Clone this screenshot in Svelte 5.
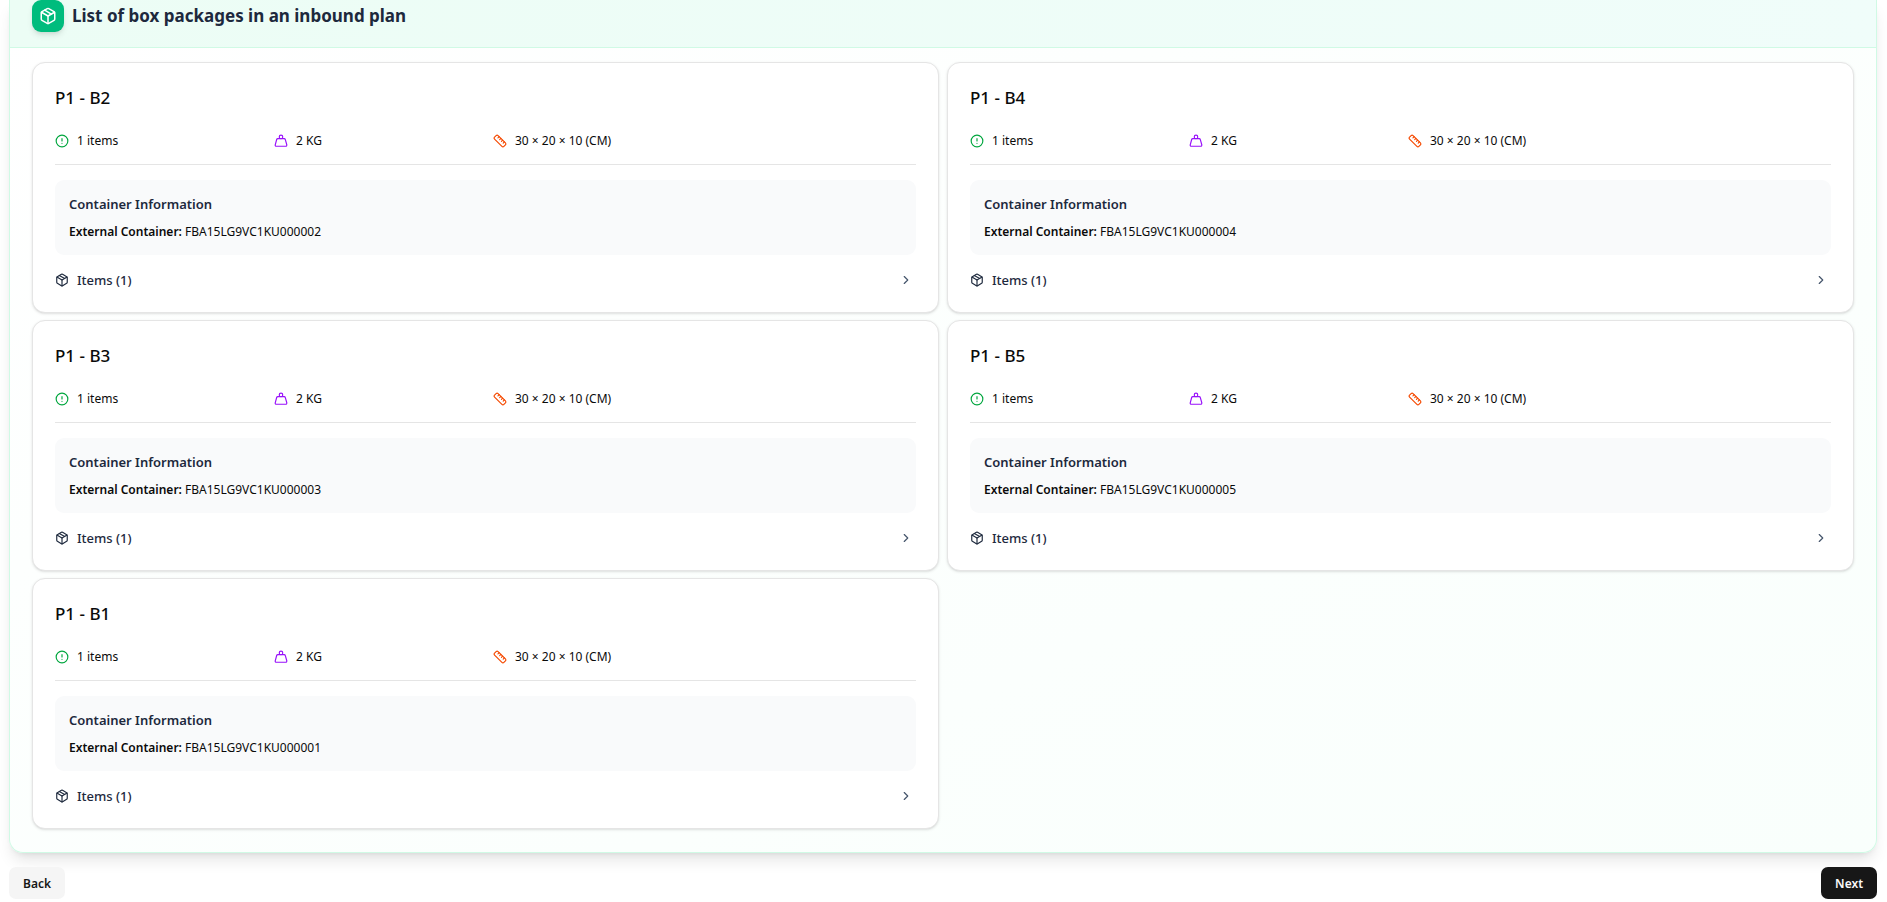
<script lang="ts">
  interface BoxPackage {
    name: string;
    items: number;
    weight: string;
    dimensions: string;
    container: string;
  }

  const names = [
    ['P1 - B2', 'FBA15LG9VC1KU000002'],
    ['P1 - B4', 'FBA15LG9VC1KU000004'],
    ['P1 - B3', 'FBA15LG9VC1KU000003'],
    ['P1 - B5', 'FBA15LG9VC1KU000005'],
    ['P1 - B1', 'FBA15LG9VC1KU000001'],
  ];

  const boxes: BoxPackage[] = names.map(([name, container]) => ({
    name,
    container,
    items: 1,
    weight: '2 KG',
    dimensions: '30 × 20 × 10 (CM)',
  }));

  let open = $state<Record<string, boolean>>({});

  function toggle(name: string) {
    open[name] = !open[name];
  }
</script>

{#snippet packageIcon()}
  <svg class="icon" viewBox="0 0 24 24" aria-hidden="true">
    <path d="M11 21.73a2 2 0 0 0 2 0l7-4A2 2 0 0 0 21 16V8a2 2 0 0 0-1-1.73l-7-4a2 2 0 0 0-2 0l-7 4A2 2 0 0 0 3 8v8a2 2 0 0 0 1 1.73z" />
    <path d="M12 22V12" />
    <path d="M3.29 7 12 12l8.71-5" />
    <path d="m7.5 4.27 9 5.15" />
  </svg>
{/snippet}

<main>
  <section class="panel">
    <header class="panel-header">
      <span class="badge">{@render packageIcon()}</span>
      <h2>List of box packages in an inbound plan</h2>
    </header>

    <div class="grid">
      {#each boxes as box (box.name)}
        <article class="card">
          <h3>{box.name}</h3>

          <div class="stats">
            <div class="stat">
              <svg class="icon green" viewBox="0 0 24 24" aria-hidden="true">
                <circle cx="12" cy="12" r="10" />
                <path d="M12 8v4M12 16h.01" />
              </svg>
              <span>{box.items} items</span>
            </div>
            <div class="stat">
              <svg class="icon purple" viewBox="0 0 24 24" aria-hidden="true">
                <circle cx="12" cy="5" r="3" />
                <path d="M6.5 8a2 2 0 0 0-1.905 1.46L2.1 18.5A2 2 0 0 0 4 21h16a2 2 0 0 0 1.925-2.54L19.4 9.5A2 2 0 0 0 17.48 8Z" />
              </svg>
              <span>{box.weight}</span>
            </div>
            <div class="stat">
              <svg class="icon orange" viewBox="0 0 24 24" aria-hidden="true">
                <path d="M21.3 15.3a2.4 2.4 0 0 1 0 3.4l-2.6 2.6a2.4 2.4 0 0 1-3.4 0L2.7 8.7a2.41 2.41 0 0 1 0-3.4l2.6-2.6a2.41 2.41 0 0 1 3.4 0Z" />
                <path d="m14.5 12.5 2-2M11.5 9.5l2-2M8.5 6.5l2-2M17.5 15.5l2-2" />
              </svg>
              <span>{box.dimensions}</span>
            </div>
          </div>

          <div class="info">
            <h4>Container Information</h4>
            <p><strong>External Container:</strong> {box.container}</p>
          </div>

          <button
            type="button"
            class="items-toggle"
            aria-expanded={!!open[box.name]}
            onclick={() => toggle(box.name)}
          >
            {@render packageIcon()}
            <span>Items ({box.items})</span>
            <svg class="icon chevron" class:open={open[box.name]} viewBox="0 0 24 24" aria-hidden="true">
              <path d="m9 18 6-6-6-6" />
            </svg>
          </button>
        </article>
      {/each}
    </div>
  </section>

  <footer>
    <button type="button" class="btn">Back</button>
    <button type="button" class="btn primary">Next</button>
  </footer>
</main>

<style>
  :global(body) {
    background: #fff;
    color: #0a0a0a;
    font-family: 'Segoe UI', 'Noto Sans', sans-serif;
    font-size: 12px;
  }
  main {
    padding: 0 10px 0 9px;
  }
  h2,
  h3,
  h4,
  p {
    margin: 0;
  }
  .icon {
    width: 14px;
    height: 14px;
    flex: none;
    fill: none;
    stroke: currentColor;
    stroke-width: 2;
    stroke-linecap: round;
    stroke-linejoin: round;
  }
  .panel {
    overflow: hidden;
    border: 1px solid #d0fae5;
    border-top: 0;
    border-radius: 0 0 14px 14px;
    background: linear-gradient(to bottom right, #fff, #f9fffc);
    box-shadow: 0 10px 15px -3px rgba(0, 0, 0, 0.1), 0 4px 6px -4px rgba(0, 0, 0, 0.1);
  }
  .panel-header {
    display: flex;
    align-items: center;
    gap: 8px;
    padding: 0 22px 15px;
    border-bottom: 1px solid #d0fae5;
    background: linear-gradient(to right, #ecfdf5, #f0fdfa);
  }
  .badge {
    display: flex;
    align-items: center;
    justify-content: center;
    width: 32px;
    height: 32px;
    border-radius: 9px;
    background: #00bc7d;
    color: #fff;
    box-shadow: 0 4px 6px -1px rgba(0, 0, 0, 0.1), 0 2px 4px -2px rgba(0, 0, 0, 0.1);
  }
  .badge .icon {
    width: 18px;
    height: 18px;
  }
  h2 {
    color: #1d293d;
    font-size: 17px;
    font-weight: 700;
    line-height: 24px;
  }
  .grid {
    display: grid;
    grid-template-columns: repeat(2, minmax(0, 1fr));
    gap: 7px 8px;
    padding: 14px 22px 23px;
  }
  .card {
    padding: 22px;
    border: 1px solid #e5e5e5;
    border-radius: 13px;
    background: #fff;
    box-shadow: 0 1px 3px rgba(0, 0, 0, 0.1), 0 1px 2px -1px rgba(0, 0, 0, 0.1);
  }
  h3 {
    font-size: 17px;
    font-weight: 500;
    line-height: 25px;
  }
  .stats {
    display: grid;
    grid-template-columns: repeat(4, 1fr);
    gap: 15px;
    margin-top: 21px;
    padding-bottom: 13px;
    border-bottom: 1px solid #e5e5e5;
  }
  .stat {
    display: flex;
    align-items: center;
    gap: 8px;
    line-height: 20px;
  }
  .green {
    color: #00a63e;
  }
  .purple {
    color: #9810fa;
  }
  .orange {
    color: #f54900;
  }
  .info {
    margin-top: 15px;
    padding: 14px 14px 13px;
    border-radius: 9px;
    background: #f9fafb;
  }
  h4 {
    margin-bottom: 8px;
    color: #1d293d;
    font-size: 13px;
    font-weight: 600;
    line-height: 20px;
  }
  p {
    line-height: 20px;
  }
  strong {
    font-weight: 600;
  }
  .items-toggle {
    display: flex;
    align-items: center;
    gap: 8px;
    width: 100%;
    margin-top: 15px;
    padding: 0 3px 0 0;
    border: 0;
    background: none;
    color: #1d293d;
    font: inherit;
    font-size: 13px;
    font-weight: 500;
    line-height: 20px;
    cursor: pointer;
  }
  .chevron {
    margin-left: auto;
    color: #45556c;
  }
  .chevron.open {
    transform: rotate(90deg);
  }
  footer {
    display: flex;
    justify-content: space-between;
    padding: 14px 0 3px;
  }
  .btn {
    height: 32px;
    padding: 0 14px;
    border: 0;
    border-radius: 7px;
    background: #f5f5f5;
    color: #171717;
    font: inherit;
    font-weight: 600;
    cursor: pointer;
  }
  .btn.primary {
    background: #171717;
    color: #fafafa;
  }
</style>
